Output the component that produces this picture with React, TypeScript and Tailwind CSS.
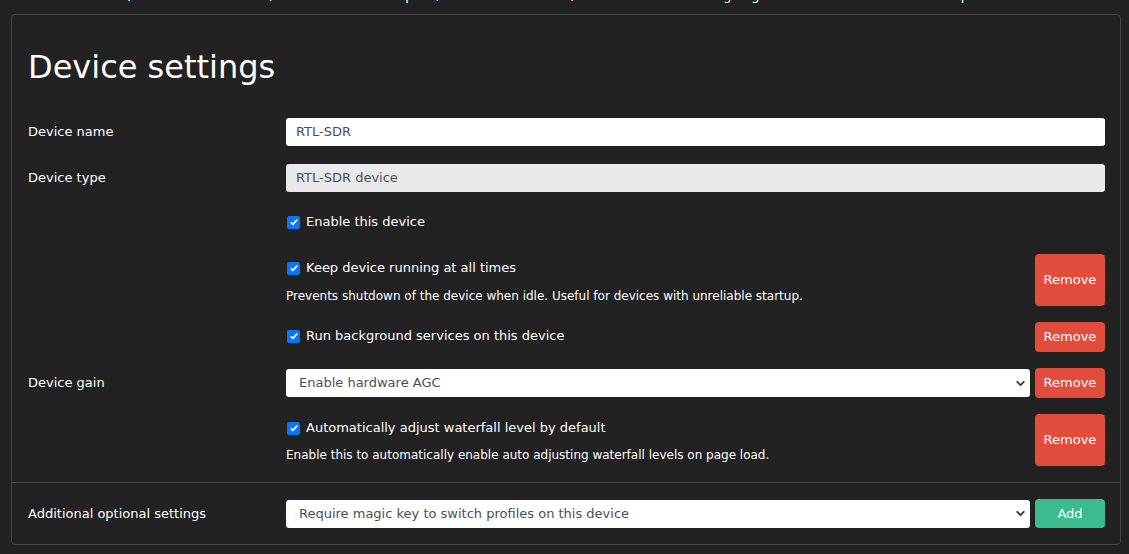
import { ChevronDown } from 'lucide-react';

function Check() {
  return (
    <span className="ml-px flex h-[13px] w-[13px] shrink-0 items-center justify-center rounded-[2px] bg-[#0b75f5]">
      <svg viewBox="0 0 12 12" className="h-[10px] w-[10px]">
        <path d="M2.2 6.4 L4.8 8.9 L9.8 3.2" fill="none" stroke="#fff" strokeWidth="2" />
      </svg>
    </span>
  );
}

function CheckLine({ label }: { label: string }) {
  return (
    <div className="flex h-[28px] items-center gap-[6px] text-[13px]">
      <Check />
      <span>{label}</span>
    </div>
  );
}

function Remove({ tall }: { tall?: boolean }) {
  return (
    <button
      type="button"
      className={
        tall
          ? 'h-[52px] w-[70px] shrink-0 rounded-[4px] bg-[#e24c3c] text-[13px] text-white'
          : 'h-[30px] w-[70px] shrink-0 rounded-[4px] bg-[#e24c3c] text-[13px] text-white'
      }
    >
      Remove
    </button>
  );
}

function Select({ value }: { value: string }) {
  return (
    <div className="flex h-[28px] flex-1 items-center justify-between rounded-[3px] bg-white pl-[13px] pr-[3px] text-[13px] text-[#495057]">
      <span>{value}</span>
      <ChevronDown size={13} strokeWidth={3.5} className="text-[#3a3a3a]" />
    </div>
  );
}

export default function App() {
  return (
    <div className="min-h-screen bg-[#222] font-['DejaVu_Sans',sans-serif] text-white">
      {/* tail of the previous section, scrolled out of view */}
      <div className="h-[14px] overflow-hidden">
        <p className="-mt-[12px] whitespace-nowrap pl-[25px] text-[13px] leading-[16px]">
          Use the device (native hardware AGC) and their whole scoped (the internal old AGC) to tune at the time of going to the defaults as it is all set up at the start of the session
        </p>
      </div>

      <div className="ml-[11px] mr-[8px] rounded-[4px] border border-[#444]">
        <div className="pb-[16px] pl-[16px] pr-[15px] pt-[33px]">
          <h1 className="text-[32px] leading-[38px]">Device settings</h1>

          <div className="mt-[32px] flex h-[28px] items-center">
            <div className="w-[258px] text-[13px]">Device name</div>
            <div className="flex h-[28px] flex-1 items-center rounded-[3px] bg-white px-[10px] text-[13px] text-[#495057]">
              RTL-SDR
            </div>
          </div>

          <div className="mt-[18px] flex h-[28px] items-center">
            <div className="w-[258px] text-[13px]">Device type</div>
            <div className="flex h-[28px] flex-1 items-center rounded-[3px] bg-[#e9e9e9] px-[10px] text-[13px] text-[#495057]">
              RTL-SDR device
            </div>
          </div>

          <div className="mt-[16px] flex">
            <div className="w-[258px]" />
            <CheckLine label="Enable this device" />
          </div>

          <div className="mt-[18px] flex items-start">
            <div className="w-[258px]" />
            <div className="flex-1">
              <CheckLine label="Keep device running at all times" />
              <p className="mt-[6px] text-[12px] leading-[16px]">
                Prevents shutdown of the device when idle. Useful for devices with unreliable startup.
              </p>
            </div>
            <Remove tall />
          </div>

          <div className="mt-[16px] flex items-start">
            <div className="w-[258px]" />
            <div className="flex-1">
              <CheckLine label="Run background services on this device" />
            </div>
            <Remove />
          </div>

          <div className="mt-[16px] flex items-center">
            <div className="w-[258px] text-[13px]">Device gain</div>
            <div className="flex flex-1 items-center gap-[5px]">
              <Select value="Enable hardware AGC" />
              <Remove />
            </div>
          </div>

          <div className="mt-[16px] flex items-start">
            <div className="w-[258px]" />
            <div className="flex-1">
              <CheckLine label="Automatically adjust waterfall level by default" />
              <p className="mt-[5px] text-[12px] leading-[16px]">
                Enable this to automatically enable auto adjusting waterfall levels on page load.
              </p>
            </div>
            <Remove tall />
          </div>
        </div>

        <div className="flex items-center border-t border-[#444] py-[16px] pl-[16px] pr-[15px]">
          <div className="w-[258px] text-[13px]">Additional optional settings</div>
          <div className="flex flex-1 items-center gap-[5px]">
            <Select value="Require magic key to switch profiles on this device" />
            <button
              type="button"
              className="h-[29px] w-[70px] shrink-0 rounded-[4px] bg-[#3cbc8d] text-[13px] text-white"
            >
              Add
            </button>
          </div>
        </div>
      </div>
    </div>
  );
}
